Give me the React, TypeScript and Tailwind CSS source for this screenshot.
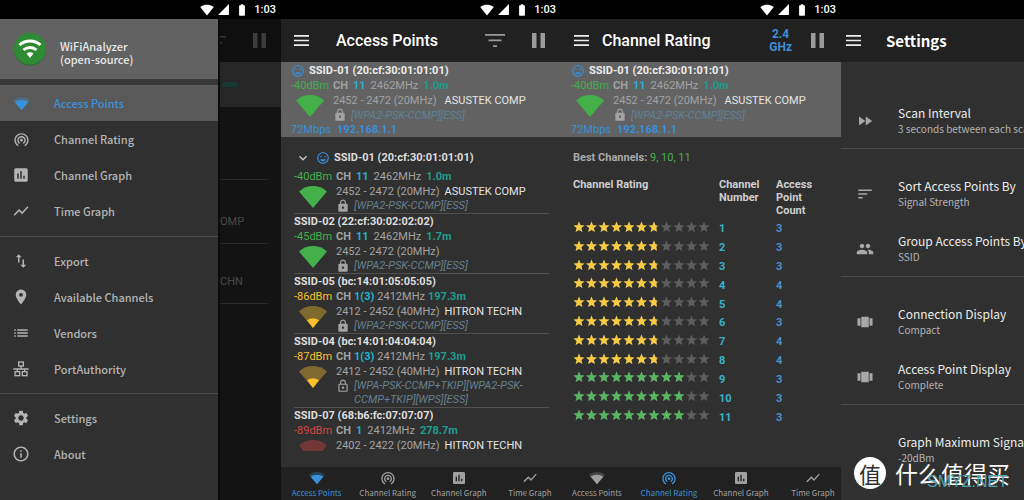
import type { ReactNode } from 'react';
import {
  MdBatteryFull,
  MdExpandMore,
  MdFastForward,
  MdGroup,
  MdImportExport,
  MdInfoOutline,
  MdInsertChart,
  MdList,
  MdLocationOn,
  MdLock,
  MdLockOutline,
  MdOutlineInsertEmoticon,
  MdSettings,
  MdShowChart,
  MdSignalCellular4Bar,
  MdSignalWifi4Bar,
  MdSort,
  MdViewCarousel,
  MdWifiTethering,
} from 'react-icons/md';

const FULL_FAN = 'M0 5.5C4 1.800 9 0 14 0s10 1.800 14 5.500L14 22z';
const LOW_FAN = 'M8 14.200c1.800-1.300 3.800-2 6-2s4.200.700 6 2L14 22z';

function StatusBar() {
  return (
    <div className="flex h-[19px] shrink-0 items-center justify-end bg-black pr-[5px] text-white">
      <MdSignalWifi4Bar className="size-[14px]" />
      <MdSignalCellular4Bar className="ml-[3px] size-[13px]" />
      <MdBatteryFull className="ml-[5px] size-[14px]" />
      <span className="ml-[5px] text-[11px] font-medium leading-[19px]">1:03</span>
    </div>
  );
}

function MenuButton() {
  return (
    <button type="button" aria-label="Menu" className="shrink-0 text-[#eeeeee]">
      <svg viewBox="0 0 15 11" className="h-[11px] w-[15px]" fill="currentColor">
        <path d="M0 0h15v1.700H0zM0 4.650h15v1.700H0zM0 9.300h15V11H0z" />
      </svg>
    </button>
  );
}

function PauseButton({ dim = false }: { dim?: boolean }) {
  return (
    <button type="button" aria-label="Pause" className={dim ? 'shrink-0 text-[#3c3c3c]' : 'shrink-0 text-[#9b9b9b]'}>
      <svg viewBox="0 0 13 15" className="h-[15px] w-[13px]" fill="currentColor">
        <path d="M0 0h4.500v15H0zM8.500 0H13v15H8.500z" />
      </svg>
    </button>
  );
}

function SignalFan({ level, className }: { level: 'full' | 'low' | 'none'; className: string }) {
  return (
    <svg viewBox="0 0 28 22" className={className} fill="currentColor">
      <path d={FULL_FAN} opacity={level === 'full' ? 1 : 0.4} />
      {level === 'low' && <path d={LOW_FAN} />}
    </svg>
  );
}

function TabFan({ className }: { className: string }) {
  return (
    <svg viewBox="0 0 24 24" className={className} fill="currentColor">
      <path opacity="0.3" d="M0 7.500C3.300 4.600 7.500 3 12 3s8.700 1.600 12 4.500L12 21.500z" />
      <path d="M2.500 10.300C5 8.200 8.300 7 12 7s7 1.200 9.500 3.300L12 21.500z" />
    </svg>
  );
}

function NetworkIcon({ className }: { className: string }) {
  return (
    <svg viewBox="0 0 24 24" className={className} fill="none" stroke="currentColor" strokeWidth="2">
      <rect x="8.500" y="1.500" width="7" height="6" />
      <rect x="3" y="16" width="7" height="6" />
      <rect x="14" y="16" width="7" height="6" />
      <path d="M12 7.500V12M0.500 12h23M6.500 12v4M17.500 12v4" />
    </svg>
  );
}

/* ---------- Navigation drawer ---------- */

type DrawerEntry = { label: string; icon: ReactNode; active?: boolean };

const drawerGroups: DrawerEntry[][] = [
  [
    { label: 'Access Points', icon: <TabFan className="size-[17px]" />, active: true },
    { label: 'Channel Rating', icon: <MdWifiTethering className="size-[17px]" /> },
    { label: 'Channel Graph', icon: <MdInsertChart className="size-[18px]" /> },
    { label: 'Time Graph', icon: <MdShowChart className="size-[18px]" /> },
  ],
  [
    { label: 'Export', icon: <MdImportExport className="size-[18px]" /> },
    { label: 'Available Channels', icon: <MdLocationOn className="size-[18px]" /> },
    { label: 'Vendors', icon: <MdList className="size-[18px]" /> },
    { label: 'PortAuthority', icon: <NetworkIcon className="size-[16px]" /> },
  ],
  [
    { label: 'Settings', icon: <MdSettings className="size-[18px]" /> },
    { label: 'About', icon: <MdInfoOutline className="size-[18px]" /> },
  ],
];

function Drawer() {
  return (
    <nav className="flex w-[218px] shrink-0 flex-col bg-[#303030] font-['Noto_Sans_CJK_SC',sans-serif]">
      <header className="flex h-[66px] shrink-0 items-center gap-[13px] border-b-[6px] border-[#383838] bg-[#626262] pl-[13px]">
        <svg viewBox="0 0 34 34" className="size-[34px]">
          <circle cx="17" cy="17.500" r="16" fill="#1f6a26" />
          <circle cx="17" cy="16.700" r="16" fill="#2e8b34" />
          <g fill="none" stroke="#fff" strokeWidth="3">
            <path d="M6.500 13c6-5.300 15-5.300 21 0" />
            <path d="M10.500 18c3.800-3.400 9.200-3.400 13 0" />
          </g>
          <path d="M13.500 21.500c2-1.700 5-1.700 7 0L17 26z" fill="#fff" />
        </svg>
        <p className="pt-[8px] text-[11px] font-medium leading-[13px] text-[#e8e8e8]">
          WiFiAnalyzer
          <br />
          (open-source)
        </p>
      </header>
      {drawerGroups.map((group, index) => (
        <ul
          key={index}
          className={
            index === 0
              ? 'border-b border-[#4d4d4d] pb-[7px]'
              : index === 1
                ? 'border-b border-[#4d4d4d] py-[6px]'
                : 'py-[6px]'
          }
        >
          {group.map((entry) => (
            <li key={entry.label}>
              <a
                href="#"
                className={
                  entry.active
                    ? 'flex h-[36px] items-center bg-[#595959] pl-[12px] text-[#3a92dc]'
                    : 'flex h-[36px] items-center pl-[12px] text-[#b4b4b4]'
                }
              >
                <span className="flex w-[42px] shrink-0 items-center">
                  <span className="flex w-[18px] justify-center">{entry.icon}</span>
                </span>
                <span className="text-[11px] font-medium leading-[16px]">{entry.label}</span>
              </a>
            </li>
          ))}
        </ul>
      ))}
    </nav>
  );
}

function DrawerScreen() {
  return (
    <section className="flex min-w-0 flex-col overflow-hidden bg-[#131313]">
      <StatusBar />
      <div className="flex min-h-0 flex-1">
        <Drawer />
        <div className="flex min-w-0 flex-1 flex-col overflow-hidden border-l-2 border-[#0b0b0b] text-[11px] text-[#4a4a4a]">
          <div className="flex h-[43px] shrink-0 items-center justify-between bg-[#0f0f0f] pr-[15px]">
            <svg viewBox="0 0 6 10" className="h-[10px] w-[6px]" fill="#343434">
              <path d="M0 0h6v1.500H0zM0 6h2v1.500H0z" />
            </svg>
            <PauseButton dim />
          </div>
          <div className="h-[45px] shrink-0 bg-[#262626] pt-[20px]">
            <div className="ml-[2px] h-[5px] w-[16px] rounded-full bg-[#143a31]" />
          </div>
          <div className="mr-[13px] h-[73px] shrink-0 border-b border-[#292929]" />
          <div className="mr-[13px] h-[64px] shrink-0 border-b border-[#292929] pt-[34px] leading-[15px]">OMP</div>
          <div className="mr-[13px] h-[60px] shrink-0 border-b border-[#292929] pt-[30px] leading-[15px]">CHN</div>
        </div>
      </div>
    </section>
  );
}

/* ---------- Access points ---------- */

type AccessPoint = {
  ssid: string;
  signal: string;
  tone: string;
  level: 'full' | 'low' | 'none';
  channel: string;
  frequency: string;
  distance: string;
  range: string;
  vendor?: string;
  security?: string;
  openLock?: boolean;
};

const accessPoints: AccessPoint[] = [
  { ssid: 'SSID-01 (20:cf:30:01:01:01)', signal: '-40dBm', tone: 'text-[#43b04a]', level: 'full', channel: '11', frequency: '2462MHz', distance: '1.0m', range: '2452 - 2472 (20MHz)', vendor: 'ASUSTEK COMP', security: '[WPA2-PSK-CCMP][ESS]' },
  { ssid: 'SSID-02 (22:cf:30:02:02:02)', signal: '-45dBm', tone: 'text-[#43b04a]', level: 'full', channel: '11', frequency: '2462MHz', distance: '1.7m', range: '2452 - 2472 (20MHz)', security: '[WPA2-PSK-CCMP][ESS]' },
  { ssid: 'SSID-05 (bc:14:01:05:05:05)', signal: '-86dBm', tone: 'text-[#fbc02d]', level: 'low', channel: '1(3)', frequency: '2412MHz', distance: '197.3m', range: '2412 - 2452 (40MHz)', vendor: 'HITRON TECHN', security: '[WPA2-PSK-CCMP][ESS]' },
  { ssid: 'SSID-04 (bc:14:01:04:04:04)', signal: '-87dBm', tone: 'text-[#fbc02d]', level: 'low', channel: '1(3)', frequency: '2412MHz', distance: '197.3m', range: '2412 - 2452 (40MHz)', vendor: 'HITRON TECHN', security: '[WPA-PSK-CCMP+TKIP][WPA2-PSK-CCMP+TKIP][WPS][ESS]', openLock: true },
  { ssid: 'SSID-07 (68:b6:fc:07:07:07)', signal: '-89dBm', tone: 'text-[#d64545]', level: 'none', channel: '1', frequency: '2412MHz', distance: '278.7m', range: '2402 - 2422 (20MHz)', vendor: 'HITRON TECHN' },
];

function AccessPointDetails({ ap, card = false }: { ap: AccessPoint; card?: boolean }) {
  const wide = ap.channel.length > 2;
  return (
    <div className="flex whitespace-nowrap text-[11px] leading-[15px] text-[#a3a3a3]">
      <div className={`${ap.tone} w-[42px] shrink-0`}>
        <div>{ap.signal}</div>
        <SignalFan level={ap.level} className="ml-[5px] mt-[2px] h-[22px] w-[28px]" />
      </div>
      <div className="min-w-0 flex-1">
        <div className={wide ? 'flex gap-[3px]' : 'flex gap-[5px]'}>
          <span className="font-bold">CH</span>
          <span className="font-bold text-[#22b2cf]">{ap.channel}</span>
          <span>{ap.frequency}</span>
          <span className="font-bold text-[#1f9d8d]">{ap.distance}</span>
        </div>
        <div className={card ? 'flex gap-[8px]' : 'flex gap-[5px]'}>
          <span>{ap.range}</span>
          <span className="text-[#e4e4e4]">{ap.vendor}</span>
        </div>
        {ap.security && (
          <div className={card ? 'flex leading-[15px]' : 'flex leading-[14px]'}>
            {ap.openLock ? (
              <MdLockOutline className="size-[14px] shrink-0" />
            ) : (
              <MdLock className="size-[14px] shrink-0" />
            )}
            <span
              className={
                card
                  ? 'ml-[4px] whitespace-normal italic text-[#5f8295]'
                  : 'ml-[4px] whitespace-normal italic text-[#667f8c]'
              }
            >
              {ap.security}
            </span>
          </div>
        )}
      </div>
    </div>
  );
}

function ConnectionCard() {
  return (
    <div className="shrink-0 overflow-hidden bg-[#626262] pl-[10px] text-[11px] leading-[15px]">
      <div className="flex h-[16px] items-end gap-[4px]">
        <MdOutlineInsertEmoticon className="size-[14px] text-[#3a8fd9]" />
        <span className="font-bold text-[#ededed]">{accessPoints[0].ssid}</span>
      </div>
      <AccessPointDetails ap={accessPoints[0]} card />
      <div className="flex gap-[6px] leading-[14px] text-[#3a8fd9]">
        <span>72Mbps</span>
        <span className="font-bold">192.168.1.1</span>
      </div>
    </div>
  );
}

function BottomNav({ active, tabClass }: { active: string; tabClass: string }) {
  const tabs = [
    { label: 'Access Points', icon: <TabFan className="size-[16px]" /> },
    { label: 'Channel Rating', icon: <MdWifiTethering className="size-[16px]" /> },
    { label: 'Channel Graph', icon: <MdInsertChart className="size-[16px]" /> },
    { label: 'Time Graph', icon: <MdShowChart className="size-[16px]" /> },
  ];
  return (
    <nav className="flex h-[33px] shrink-0 overflow-hidden bg-[#212121] font-['Noto_Sans_CJK_SC',sans-serif]">
      {tabs.map((tab) => (
        <button
          key={tab.label}
          type="button"
          className={`${tabClass} ${tab.label === active ? 'text-[#3a92dc]' : 'text-[#a0a0a0]'} flex shrink-0 flex-col items-center whitespace-nowrap pt-[3px] text-[8px] leading-[13px]`}
        >
          {tab.icon}
          {tab.label}
        </button>
      ))}
    </nav>
  );
}

function AccessPointsScreen() {
  const [first, ...others] = accessPoints;
  return (
    <section className="flex min-w-0 flex-col overflow-hidden bg-[#303030]">
      <StatusBar />
      <header className="flex h-[43px] shrink-0 items-center bg-[#212121] pl-[13px] pr-[16px]">
        <MenuButton />
        <h1 className="ml-[27px] flex-1 whitespace-nowrap text-[16px] font-medium leading-[20px] text-white">
          Access Points
        </h1>
        <button type="button" aria-label="Filter" className="mr-[27px] text-[#9b9b9b]">
          <svg viewBox="0 0 20 13" className="h-[13px] w-[20px]" fill="currentColor">
            <path d="M0 0h20v1.800H0zM3.500 5.500h13v1.800h-13zM8 11.200h4V13H8z" />
          </svg>
        </button>
        <PauseButton />
      </header>
      <ConnectionCard />
      <ul className="mb-[16px] min-h-0 flex-1 overflow-hidden pl-[13px] pr-[12px] pt-[13px]">
        <li className="border-b border-[#505050]">
          <div className="mb-[3px] flex h-[16px] items-center">
            <MdExpandMore className="ml-[1px] size-[16px] text-[#c8c8c8]" />
            <MdOutlineInsertEmoticon className="ml-[5px] size-[14px] text-[#3a8fd9]" />
            <span className="ml-[4px] text-[11px] font-bold text-[#dedede]">{first.ssid}</span>
          </div>
          <AccessPointDetails ap={first} />
        </li>
        {others.map((ap) => (
          <li key={ap.ssid} className="border-b border-[#505050]">
            <div className="text-[11px] font-bold leading-[15px] text-[#dedede]">{ap.ssid}</div>
            <AccessPointDetails ap={ap} />
          </li>
        ))}
      </ul>
      <BottomNav active="Access Points" tabClass="w-[25.4%]" />
    </section>
  );
}

/* ---------- Channel rating ---------- */

const STAR = 'M6 0.500l1.500 3.700 4 .300-3.100 2.600 1 3.900L6 8.900 2.600 11l1-3.900L.500 4.500l4-.300z';
const STAR_PITCH = 12.5;

const ratings = [
  { channel: 1, count: 3, stars: 6.7 },
  { channel: 2, count: 3, stars: 6.7 },
  { channel: 3, count: 3, stars: 6.7 },
  { channel: 4, count: 4, stars: 6.7 },
  { channel: 5, count: 4, stars: 6.7 },
  { channel: 6, count: 3, stars: 6.7 },
  { channel: 7, count: 4, stars: 6.7 },
  { channel: 8, count: 4, stars: 6.7 },
  { channel: 9, count: 3, stars: 9 },
  { channel: 10, count: 3, stars: 9 },
  { channel: 11, count: 3, stars: 9 },
];

function Stars({ value, id }: { value: number; id: string }) {
  const row = Array.from({ length: 11 }, (_, i) => (
    <path key={i} d={STAR} transform={`translate(${i * STAR_PITCH} 0)`} />
  ));
  return (
    <svg viewBox="0 0 138 12" className="h-[12px] w-[138px]" role="img" aria-label={`${value} of 11`}>
      <clipPath id={id}>
        <rect width={value * STAR_PITCH} height="12" />
      </clipPath>
      <g fill="#5e5e5e">{row}</g>
      <g fill={value >= 9 ? '#58b560' : '#f8cb45'} clipPath={`url(#${id})`}>
        {row}
      </g>
    </svg>
  );
}

function ChannelRatingScreen() {
  return (
    <section className="flex min-w-0 flex-col overflow-hidden bg-[#303030]">
      <StatusBar />
      <header className="flex h-[43px] shrink-0 items-center bg-[#212121] pl-[13px] pr-[17px]">
        <MenuButton />
        <h1 className="ml-[13px] flex-1 whitespace-nowrap text-[16px] font-medium leading-[20px] text-white">
          Channel Rating
        </h1>
        <button type="button" className="mr-[19px] text-center text-[12px] font-bold leading-[13px] text-[#3d8fd6]">
          2.4
          <br />
          GHz
        </button>
        <PauseButton />
      </header>
      <ConnectionCard />
      <div className="min-h-0 flex-1 overflow-hidden pl-[12px] pt-[13px] text-[11px]">
        <p className="leading-[16px] text-[#4caf50]">
          <span className="font-bold text-[#a8a8a8]">Best Channels:</span> 9, 10, 11
        </p>
        <table className="mt-[12px] h-[248px] w-full table-fixed border-collapse text-left leading-[13px]">
          <thead>
            <tr className="h-[41px] align-top text-[#cfcfcf]">
              <th className="w-[146px] p-0">Channel Rating</th>
              <th className="w-[57px] p-0">Channel Number</th>
              <th className="p-0">
                <span className="block w-[50px]">Access Point Count</span>
              </th>
            </tr>
          </thead>
          <tbody>
            {ratings.map((rating) => (
              <tr key={rating.channel} className="font-bold">
                <td className="p-0 pb-[3px]">
                  <Stars value={rating.stars} id={`rating-${rating.channel}`} />
                </td>
                <td className="p-0 pt-[1px] text-[#37b3c9]">{rating.channel}</td>
                <td className="p-0 pt-[1px] text-[#4a90cf]">{rating.count}</td>
              </tr>
            ))}
          </tbody>
        </table>
      </div>
      <BottomNav active="Channel Rating" tabClass="w-[25.700%]" />
    </section>
  );
}

/* ---------- Settings ---------- */

type Preference = { title: string; value: string; icon?: ReactNode };

const preferenceGroups: Preference[][] = [
  [{ title: 'Scan Interval', value: '3 seconds between each scan', icon: <MdFastForward className="size-[18px]" /> }],
  [
    { title: 'Sort Access Points By', value: 'Signal Strength', icon: <MdSort className="size-[18px]" /> },
    { title: 'Group Access Points By', value: 'SSID', icon: <MdGroup className="size-[18px]" /> },
  ],
  [
    { title: 'Connection Display', value: 'Compact', icon: <MdViewCarousel className="size-[18px]" /> },
    { title: 'Access Point Display', value: 'Complete', icon: <MdViewCarousel className="size-[18px]" /> },
  ],
  [{ title: 'Graph Maximum Signal Strength', value: '-20dBm' }],
];

function Watermark() {
  return (
    <div className="absolute bottom-[11px] left-[13px] flex items-center gap-[9px] whitespace-nowrap">
      <span className="flex size-[32px] items-center justify-center rounded-full bg-white text-[22px] leading-[32px] text-[#303030]">
        值
      </span>
      <span className="text-[23px] leading-[32px] text-white">什么值得买</span>
      <span className="absolute left-[73px] top-[16px] font-['Liberation_Sans',sans-serif] text-[16px] leading-[18px] text-[#4fa3ad]">
        SMYZ.NET
      </span>
    </div>
  );
}

function SettingsScreen() {
  return (
    <section className="relative flex min-w-0 flex-col overflow-hidden bg-[#303030] font-['Noto_Sans_CJK_SC',sans-serif]">
      <div className="h-[19px] shrink-0 bg-black" />
      <header className="flex h-[43px] shrink-0 items-center bg-[#212121] pl-[5px]">
        <MenuButton />
        <h1 className="ml-[25px] text-[15px] font-bold leading-[20px] text-white">Settings</h1>
      </header>
      <div className="flex min-h-0 flex-1 flex-col gap-[18px] overflow-hidden pt-[32px]">
        {preferenceGroups.map((group) => (
          <ul key={group[0].title} className="shrink-0 shadow-[inset_0_-1px_0_#484848] last:shadow-none">
            {group.map((item) => (
              <li key={item.title} className="flex h-[55px] items-center whitespace-nowrap pb-[2px]">
                <span className="ml-[15px] w-[42px] shrink-0 text-[#a8a8a8]">{item.icon}</span>
                <div>
                  <div className="text-[12px] leading-[16px] text-[#ececec]">{item.title}</div>
                  <div className="text-[10px] leading-[15px] text-[#b4b4b4]">{item.value}</div>
                </div>
              </li>
            ))}
          </ul>
        ))}
      </div>
      <Watermark />
    </section>
  );
}

export default function App() {
  return (
    <main className="grid h-screen grid-cols-[281fr_280fr_280fr_183fr] overflow-hidden bg-[#303030] font-[Roboto,sans-serif]">
      <DrawerScreen />
      <AccessPointsScreen />
      <ChannelRatingScreen />
      <SettingsScreen />
    </main>
  );
}
